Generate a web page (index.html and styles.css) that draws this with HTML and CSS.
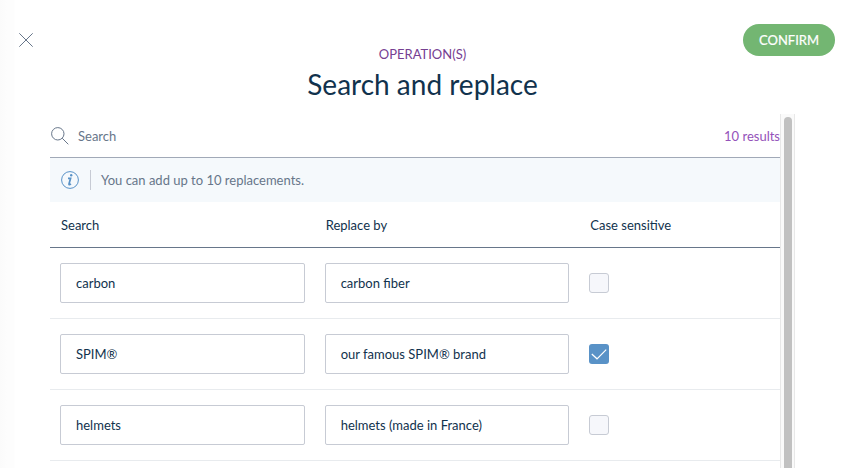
FILE: index.html
```html
<!DOCTYPE html>
<html lang="en">
<head>
<meta charset="utf-8">
<title>Search and replace</title>
<link rel="stylesheet" href="styles.css">
</head>
<body>
<div class="modal">
  <header class="header">
    <button class="close" aria-label="Close"><svg width="14" height="14" viewBox="0 0 14 14"><path d="M.3 .3 13.7 13.7M13.7 .3 .3 13.7"/></svg></button>
    <div class="heading">
      <div class="section">OPERATION(S)</div>
      <h1 class="title">Search and replace</h1>
    </div>
    <button class="confirm">CONFIRM</button>
  </header>
  <main class="body">
    <div class="content">
      <div class="search">
        <svg class="search-icon" width="18" height="18" viewBox="0 0 18 18"><circle cx="6.8" cy="6.8" r="6.2"/><path d="M11.2 11.2 17.3 17.3"/></svg>
        <span class="placeholder">Search</span>
        <span class="count">10 results</span>
      </div>
      <div class="info">
        <svg class="info-icon" width="18" height="18" viewBox="0 0 18 18"><circle cx="9" cy="9" r="8.4"/><path class="stem" d="M7 7.3H9.6L8 13Q7.9 14.4 10 12.9"/><circle class="dot" cx="10.2" cy="4.3" r="1.2"/></svg>
        <p class="info-text">You can add up to 10 replacements.</p>
      </div>
      <div class="row head"><span>Search</span><span>Replace by</span><span>Case sensitive</span></div>
      <div class="row">
        <div class="cell"><div class="input">carbon</div></div>
        <div class="cell"><div class="input">carbon fiber</div></div>
        <div class="cell"><div class="checkbox"></div></div>
      </div>
      <div class="row">
        <div class="cell"><div class="input">SPIM®</div></div>
        <div class="cell"><div class="input">our famous SPIM® brand</div></div>
        <div class="cell"><div class="checkbox checked"><svg width="20" height="20" viewBox="0 0 20 20"><path d="M2.8 10 8 14.8 17.2 5.6"/></svg></div></div>
      </div>
      <div class="row">
        <div class="cell"><div class="input">helmets</div></div>
        <div class="cell"><div class="input">helmets (made in France)</div></div>
        <div class="cell"><div class="checkbox"></div></div>
      </div>
    </div>
    <div class="scrollbar"><div class="thumb"></div></div>
  </main>
</div>
</body>
</html>
```
FILE: styles.css
```css
* { box-sizing: border-box; }
body {
  margin: 0;
  height: 468px;
  overflow: hidden;
  font: 13px/16px Lato, "Liberation Sans", sans-serif;
  color: #11324d;
  background: #fff;
}
.modal {
  height: 468px;
  display: flex;
  flex-direction: column;
  background: linear-gradient(90deg, #fbfbfb 0, #fdfdfd 7px, #fdfdfd 14px, #fff 15px);
}
button { border: 0; padding: 0; font: inherit; background: none; }
svg { display: block; fill: none; }
.header {
  flex: none;
  height: 114px;
  display: grid;
  grid-template-columns: 50px 1fr 50px;
  align-items: start;
}
.close { margin: 33px 0 0 19px; width: 14px; height: 14px; }
.close svg { stroke: #67768a; stroke-width: 1; }
.heading { padding: 46px 14px 0 0; text-align: center; }
.section { color: #764092; }
.title { margin: 4px 0 0; font-size: 28px; line-height: 36px; font-weight: 400; }
.confirm {
  margin: 24px 0 0 -66px;
  width: 92px;
  height: 32px;
  border-radius: 16px;
  background: #73b672;
  color: #fff;
  -webkit-text-stroke: .2px #fff;
}
.body { flex: 1; min-height: 0; display: flex; padding-left: 50px; }
.content { width: 730px; flex: none; }
.search {
  height: 44px;
  display: flex;
  align-items: center;
  border-bottom: 1px solid #a1a9b7;
  color: #67768a;
}
.search-icon { margin-left: 1px; stroke: #67768a; stroke-width: 1; }
.placeholder { margin-left: 9px; }
.count { margin-left: auto; color: #9452ba; }
.info {
  height: 44px;
  display: flex;
  align-items: center;
  padding-left: 11px;
  background: #f5f9fc;
}
.info-icon { stroke: #5992c7; stroke-width: 1; }
.info-icon .stem { stroke-width: 1.7; }
.info-icon .dot { fill: #5992c7; stroke: none; }
.info-text {
  margin: 0 0 0 11px;
  padding-left: 10px;
  border-left: 1px solid #c7cbd4;
  line-height: 20px;
  color: #67768a;
}
.row {
  height: 71px;
  display: grid;
  grid-template-columns: 264.67px 264.67px 1fr;
  align-items: center;
  border-bottom: 1px solid #e8ebee;
}
.head { height: 46px; border-bottom-color: #67768a; }
.head span { padding: 1px 0 0 11px; }
.cell { padding: 0 10px; }
.input {
  height: 40px;
  padding: 0 15px;
  border: 1px solid #c7cbd4;
  border-radius: 2px;
  background: #fff;
  line-height: 39px;
}
.checkbox {
  width: 20px;
  height: 20px;
  border: 1px solid #c7cbd4;
  border-radius: 3px;
  background: #f6f7fb;
}
.checked { border: 0; background: #5992c7; }
.checked svg { stroke: #fff; stroke-width: 1.2; }
.scrollbar {
  width: 15px;
  border: solid #e8e8e8;
  border-width: 0 1px;
  background: #fafafa;
  padding: 3px 3px 0;
}
.thumb { width: 8px; height: 100%; border-radius: 4px 4px 0 0; background: #c1c1c1; }
```
